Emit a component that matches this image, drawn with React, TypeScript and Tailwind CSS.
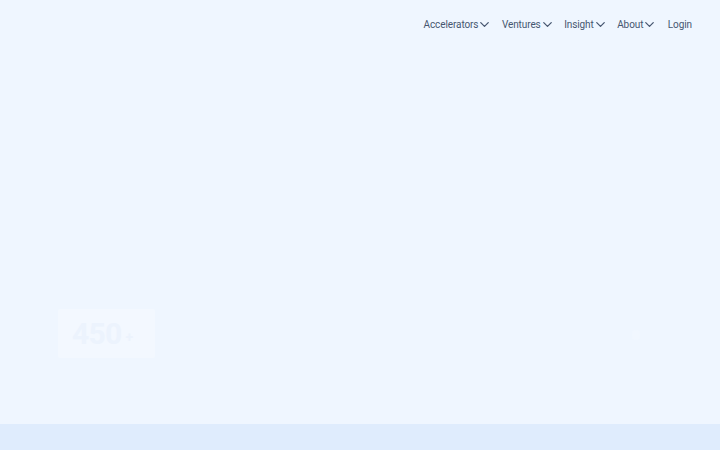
import { ChevronDown } from "lucide-react";

const menu = ["Accelerators", "Ventures", "Insight", "About"];

export default function App() {
  return (
    <div className="flex h-[450px] w-[720px] flex-col overflow-hidden bg-[#eff6ff] font-['Roboto',sans-serif]">
      <header className="flex h-[49px] items-center justify-end pr-[28px]">
        <nav className="flex items-center gap-[12.5px] text-[10px] tracking-[-0.1px] text-[#465670]">
          {menu.map((m) => (
            <button key={m} className="flex items-center">
              {m}
              <ChevronDown className="-mr-[3px] ml-[-1px] h-[15px] w-[15px]" strokeWidth={2} />
            </button>
          ))}
          <button className="ml-[1px]">Login</button>
        </nav>
      </header>

      <main className="flex flex-1 items-end justify-between pb-[66px] pl-[58px] pr-[80px]">
        <div className="flex h-[49px] w-[97px] items-center rounded-[2px] bg-[#f3f8ff] pl-[14px]">
          <span className="text-[30px] font-bold leading-none tracking-tight text-[#ecf3fd]">450</span>
          <span className="ml-1 mt-2 text-[14px] font-bold text-[#ecf3fd]">+</span>
        </div>
        <div className="mb-[18px] h-[10px] w-[8px] rounded-full bg-[#f1f7ff]" />
      </main>

      <footer className="h-[26px] bg-[#dfecfd]" />
    </div>
  );
}
